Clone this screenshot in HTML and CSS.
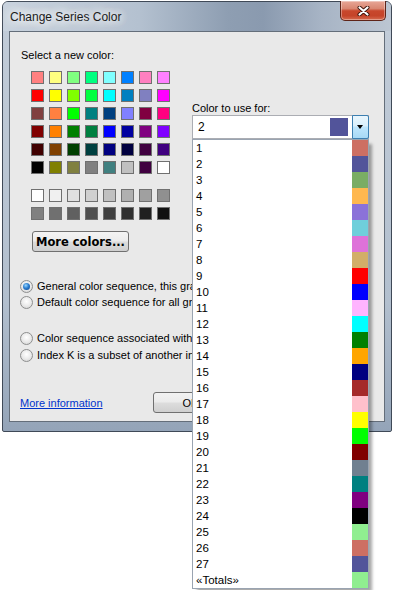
FILE: index.html
```html
<!DOCTYPE html>
<html lang="en">
<head>
    <meta charset="UTF-8">
    <meta name="viewport" content="width=device-width, initial-scale=1.0">
    <title>Change Series Color</title>
    <link rel="stylesheet" href="styles.css">
</head>
<body>
    <div class="window">
        <!-- Title bar -->
        <div class="titlebar">
            <span class="title">Change Series Color</span>
            <button class="close-btn" aria-label="Close">
                <svg width="13" height="10" viewBox="0 0 13 10">
                    <path d="M2.5 1.5 L10.5 8.5 M10.5 1.5 L2.5 8.5" stroke="#3a1209" stroke-width="4" stroke-linecap="round"/>
                    <path d="M2.5 1.5 L10.5 8.5 M10.5 1.5 L2.5 8.5" stroke="#ffffff" stroke-width="2.2" stroke-linecap="round"/>
                </svg>
            </button>
        </div>

        <div class="client">
            <div class="top">
                <!-- Palette -->
                <div class="palette">
                    <p class="label">Select a new color:</p>
                    <div class="swatches" id="basic-colors"></div>
                    <div class="swatches grays" id="gray-colors"></div>
                    <button class="more-btn">More colors...</button>
                </div>

                <!-- Series picker -->
                <div class="target">
                    <p class="label">Color to use for:</p>
                    <div class="combo">
                        <span class="combo-value">2</span>
                        <span class="combo-swatch"></span>
                        <span class="combo-arrow"></span>
                    </div>
                </div>
            </div>

            <!-- Options -->
            <div class="options">
                <label class="option"><span class="radio checked"></span>General color sequence, this graph only</label>
                <label class="option"><span class="radio"></span>Default color sequence for all graphs</label>
                <label class="option gap"><span class="radio"></span>Color sequence associated with Index K</label>
                <label class="option tight"><span class="radio"></span>Index K is a subset of another index</label>
            </div>

            <div class="footer">
                <a href="#" class="more-info">More information</a>
                <button class="dlg-btn">OK</button>
                <button class="dlg-btn">Cancel</button>
            </div>
        </div>
    </div>

    <!-- Open dropdown, drawn over the dialog -->
    <ul class="combo-list" id="series-list"></ul>

    <script>
        const basicColors = [
            "#ff8080", "#ffff80", "#80ff80", "#00ff80", "#80ffff", "#0080ff", "#ff80c0", "#ff80ff",
            "#ff0000", "#ffff00", "#80ff00", "#00ff40", "#00ffff", "#0080c0", "#8080c0", "#ff00ff",
            "#804040", "#ff8040", "#00ff00", "#008080", "#004080", "#8080ff", "#800040", "#ff0080",
            "#800000", "#ff8000", "#008000", "#008040", "#0000ff", "#0000a0", "#800080", "#8000ff",
            "#400000", "#804000", "#004000", "#004040", "#000080", "#000040", "#400040", "#400080",
            "#000000", "#808000", "#808040", "#808080", "#408080", "#c0c0c0", "#400040", "#ffffff"
        ];
        const grayColors = [
            "#ffffff", "#f0f0f0", "#e0e0e0", "#d0d0d0", "#c0c0c0", "#b0b0b0", "#a0a0a0", "#909090",
            "#808080", "#707070", "#606060", "#505050", "#404040", "#303030", "#202020", "#101010"
        ];
        const seriesColors = [
            "#cd6f63", "#52549a", "#7aad64", "#ffb84f", "#8b72d9", "#6fcfdb", "#de72d9", "#d2ae68",
            "#ff0000", "#0000ff", "#ffb4ff", "#00ffff", "#008000", "#ffa500", "#000080", "#a52a2a",
            "#ffc0cb", "#ffff00", "#00ff00", "#800000", "#708090", "#008080", "#800080", "#000000",
            "#90ee90", "#cd6f63", "#52549a"
        ];

        // Swatch grids
        const fillSwatches = (id, colors) => {
            const grid = document.getElementById(id);
            colors.forEach((color) => {
                const cell = document.createElement("span");
                cell.classList.add("swatch");
                cell.style.background = color;
                grid.appendChild(cell);
            });
        };
        fillSwatches("basic-colors", basicColors);
        fillSwatches("gray-colors", grayColors);

        // Dropdown list
        const list = document.getElementById("series-list");
        const items = seriesColors.map((color, i) => ({ name: String(i + 1), color }));
        items.push({ name: "«Totals»", color: "#90ee90" });
        items.forEach((item) => {
            const li = document.createElement("li");
            li.innerHTML = `<span class="item-name">${item.name}</span><span class="item-color" style="background:${item.color}"></span>`;
            list.appendChild(li);
        });
    </script>
</body>
</html>
```

FILE: styles.css
```css
/* Global */
body {
    margin: 0;
    padding: 0;
    background: #fff;
    font-family: 'Liberation Sans', Arial, sans-serif;
    font-size: 11px;
    color: #000;
}

p {
    margin: 0;
}

/* Window frame */
.window {
    box-sizing: border-box;
    width: 390px;
    height: 431px;
    margin: 1px 0 0 2px;
    border: 1px solid #3f4957;
    border-radius: 6px 6px 2px 2px;
    background: linear-gradient(180deg, #c3cdd9 0%, #b2bfce 70%, #94a4b8 100%);
    display: flex;
    flex-direction: column;
}

.titlebar {
    height: 29px;
    display: flex;
    justify-content: space-between;
    align-items: center;
    padding: 0 5px 0 7px;
    border-radius: 5px 5px 0 0;
    background: linear-gradient(90deg, #c9d3de 0%, #b4c1d0 35%, #8e9eb2 58%, #8a9aaf 67%, #a7b4c5 82%, #bcc6d2 100%);
}

.title {
    font-size: 12px;
    color: #1b1b1b;
    text-shadow: 0 0 8px #fff, 0 0 10px #fff, 0 0 16px #fff, 0 0 20px #fff;
}

.close-btn {
    align-self: flex-start;
    margin-top: -1px;
    width: 46px;
    height: 20px;
    padding: 0;
    border: 1px solid #5e2418;
    border-top: none;
    border-radius: 0 0 5px 5px;
    background: linear-gradient(180deg, #e8a797 0%, #d98671 40%, #c8472c 52%, #c54429 78%, #d66c50 100%);
    box-shadow: inset 0 0 0 1px rgba(255, 255, 255, 0.35);
    display: flex;
    justify-content: center;
    align-items: center;
}

/* Dialog body */
.client {
    box-sizing: border-box;
    height: 391px;
    margin: 0 6px;
    padding: 16px 0 0 11px;
    border: 1px solid #646e7a;
    background: #e9e9e9;
}

.top {
    display: flex;
}

.palette {
    width: 171px;
}

.label {
    line-height: 14px;
}

.swatches {
    display: grid;
    grid-template-columns: repeat(8, 13px);
    grid-auto-rows: 13px;
    gap: 5px;
    margin: 9px 0 0 10px;
}

.swatches.grays {
    margin-top: 15px;
}

.swatch {
    box-sizing: border-box;
    border: 1px solid #707070;
}

.more-btn {
    display: block;
    box-sizing: border-box;
    width: 97px;
    height: 21px;
    margin: 11px 0 0 11px;
    padding: 0;
    border: 1px solid #707070;
    border-radius: 3px;
    background: linear-gradient(180deg, #f4f4f4 0%, #ececec 48%, #dcdcdc 52%, #cfcfcf 100%);
    font-family: 'DejaVu Sans', sans-serif;
    font-weight: bold;
    font-size: 11.5px;
    color: #000;
}

/* Series combo */
.target {
    margin-top: 53px;
}

.combo {
    box-sizing: border-box;
    width: 177px;
    height: 24px;
    border: 1px solid #abadb3;
    background: #fff;
    display: flex;
    align-items: center;
}

.combo-value {
    flex: 1;
    padding-left: 5px;
    font-size: 12px;
}

.combo-swatch {
    width: 18px;
    height: 18px;
    margin-right: 4px;
    background: #52549a;
}

.combo-arrow {
    position: relative;
    box-sizing: border-box;
    width: 17px;
    height: 24px;
    margin: -1px -1px -1px 0;
    border: 1px solid #3c7fb1;
    border-radius: 0 2px 2px 0;
    background: linear-gradient(180deg, #eaf6fd 0%, #d9f0fc 45%, #bee6fd 50%, #a7d9f5 100%);
}

.combo-arrow::after {
    content: "";
    position: absolute;
    left: 4px;
    top: 9px;
    border-left: 3.5px solid transparent;
    border-right: 3.5px solid transparent;
    border-top: 4px solid #000;
}

/* Open dropdown list (floats over the dialog) */
.combo-list {
    position: absolute;
    z-index: 10;
    top: 139px;
    left: 192px;
    box-sizing: border-box;
    width: 177px;
    margin: 0;
    padding: 0;
    list-style: none;
    background: #fff;
    border: 1px solid #9aa4b1;
    box-shadow: 4px 4px 3px -1px rgba(0, 0, 0, 0.35);
}

.combo-list li {
    height: 16px;
    display: flex;
    align-items: center;
}

.item-name {
    flex: 1;
    padding-left: 3px;
    line-height: 16px;
    font-size: 11.5px;
}

.item-color {
    width: 16px;
    height: 16px;
}

/* Radio options */
.options {
    margin: 26px 0 0 -1px;
}

.option {
    display: flex;
    align-items: center;
    gap: 4px;
    height: 16px;
    white-space: nowrap;
}

.option.gap {
    margin-top: 20px;
}

.option.tight {
    margin-top: 1px;
}

.radio {
    position: relative;
    box-sizing: border-box;
    width: 13px;
    height: 13px;
    border: 1px solid #8e8f8f;
    border-radius: 50%;
    background: radial-gradient(circle at 50% 40%, #ffffff 0%, #ebebeb 50%, #cfcfcf 100%);
}

.radio.checked::after {
    content: "";
    position: absolute;
    left: 2px;
    top: 2px;
    width: 7px;
    height: 7px;
    border-radius: 50%;
    background: radial-gradient(circle at 40% 35%, #9ad7ff 0%, #2b7ed0 45%, #0e3f86 100%);
}

/* Footer */
.footer {
    display: grid;
    grid-template-columns: 127px 75px 75px;
    column-gap: 6px;
    align-items: center;
    margin: 29px 0 0 -1px;
}

.more-info {
    color: #0033cc;
    text-decoration: underline;
}

.dlg-btn {
    box-sizing: border-box;
    height: 21px;
    padding: 0;
    border: 1px solid #707070;
    border-radius: 3px;
    background: linear-gradient(180deg, #f2f2f2 0%, #ebebeb 48%, #dddddd 52%, #cfcfcf 100%);
    font-family: 'Liberation Sans', Arial, sans-serif;
    font-size: 11px;
    color: #000;
}
```
